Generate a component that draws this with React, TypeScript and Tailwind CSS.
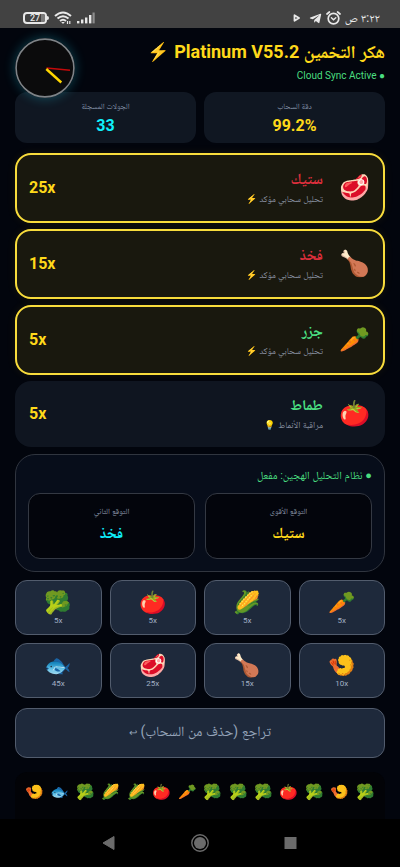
import { FaTelegramPlane } from 'react-icons/fa';

const predictions = [
  { icon: '🥩', name: 'ستيك', rate: '25x', color: 'text-[#dc2f3c]', sure: true },
  { icon: '🍗', name: 'فخذ', rate: '15x', color: 'text-[#dc2f3c]', sure: true },
  { icon: '🥕', name: 'جزر', rate: '5x', color: 'text-[#4ade80]', sure: true },
  { icon: '🍅', name: 'طماط', rate: '5x', color: 'text-[#4ade80]', sure: false },
];

const items = [
  { icon: '🥕', rate: '5x' },
  { icon: '🌽', rate: '5x' },
  { icon: '🍅', rate: '5x' },
  { icon: '🥦', rate: '5x' },
  { icon: '🍤', rate: '10x' },
  { icon: '🍗', rate: '15x' },
  { icon: '🥩', rate: '25x' },
  { icon: '🐟', rate: '45x' },
];

const rounds = ['🥦', '🍤', '🥦', '🍅', '🥦', '🥦', '🥦', '🥕', '🍅', '🌽', '🌽', '🥦', '🐟', '🍤'];

function StatusBar() {
  return (
    <div dir="ltr" className="h-7 bg-[#424242] text-[#e8e8e8] flex items-center justify-between pl-[23px] pr-5 pt-2">
      <div className="flex items-center gap-[5px]">
        <div className="flex items-center">
          <div className="relative w-6 h-3 rounded-[4px] border-2 border-[#e8e8e8] overflow-hidden flex items-center justify-center">
            <span className="absolute inset-y-0 right-0 w-1 bg-[#7a7a7a]" />
            <span className="relative text-[9px] leading-none font-medium">27</span>
          </div>
          <span className="w-0.5 h-1 bg-[#e8e8e8] rounded-r-sm" />
        </div>
        {/* wifi */}
        <svg width="18" height="14" viewBox="0 0 18 14" fill="none" stroke="currentColor" strokeWidth="2">
          <path d="M1 5 Q9 -2 17 5" />
          <path d="M3.5 7.5 Q9 3 14.5 7.5" />
          <path d="M6 10 Q9 7.5 12 10" />
          <path d="M7.2 11 L9 13 L10.8 11 Z" fill="currentColor" stroke="none" />
          <path d="M13.5 10v3M15.8 10v3" strokeWidth="1.2" />
        </svg>
        {/* signal */}
        <svg width="18" height="12" viewBox="0 0 18 12" fill="currentColor">
          <rect x="0" y="9" width="2.4" height="2.4" />
          <rect x="4" y="7.5" width="2.4" height="3.9" />
          <rect x="8" y="5.5" width="2.4" height="5.9" />
          <rect x="12" y="3" width="2.4" height="8.4" />
          <rect x="15.5" y="0.5" width="2.2" height="10.9" opacity="0.45" />
        </svg>
      </div>
      <div className="flex items-center">
        <svg width="8" height="8" viewBox="0 0 8 8" className="mr-2">
          <path d="M1.5 1.2 L6 4 L1.5 6.8 Z" fill="none" stroke="currentColor" strokeWidth="1.8" strokeLinejoin="round" />
        </svg>
        <FaTelegramPlane className="w-[13px] h-[13px] mr-1" />
        <svg width="15" height="14" viewBox="0 0 15 14" fill="none" stroke="currentColor" strokeWidth="1.7" strokeLinecap="round" className="mr-1">
          <circle cx="7.5" cy="7.6" r="5.3" />
          <path d="M5.4 6.8 L7.5 8.8 L9.8 6.8" strokeWidth="1.4" />
          <path d="M1 3 L3.4 1M14 3 L11.6 1" />
        </svg>
        <span dir="rtl" className="text-xs leading-none">٣:٢٢ ص</span>
      </div>
    </div>
  );
}

function Clock() {
  return (
    <div className="absolute left-0 top-[10px] w-[60px] h-[60px] rounded-full shadow-[0_0_12px_rgba(34,211,238,0.3)]">
      <svg viewBox="0 0 60 60" className="w-full h-full">
        <circle cx="30" cy="30" r="28.9" fill="#0b0b0c" stroke="#7f8488" strokeWidth="1.6" />
        <path d="M31.5 30 L55 32.3" stroke="#c40a0a" strokeWidth="1.6" />
        <path d="M31.3 31 L46.3 44.5" stroke="#ffd700" strokeWidth="2.4" />
      </svg>
    </div>
  );
}

function Stat({ label, value, color }: { label: string; value: string; color: string }) {
  return (
    <div className="flex-1 rounded-xl bg-[#101722] pt-2 pb-1.5 flex flex-col items-center">
      <span className="text-[8px] leading-[14px] text-[#8391a7]">{label}</span>
      <span className={`text-base leading-[23px] font-bold ${color}`}>{value}</span>
    </div>
  );
}

function Prediction({ icon, name, rate, color, sure }: (typeof predictions)[number]) {
  return (
    <li
      className={`rounded-2xl flex items-center ${
        sure
          ? 'h-[70px] px-3 border-2 border-[#f8dc3c] bg-[#19180e] shadow-[0_0_10px_rgba(250,204,21,0.08)]'
          : 'h-[66px] px-3.5 bg-[#0f1520]'
      }`}
    >
      <span className="text-[25px] leading-8 w-8 flex justify-center">{icon}</span>
      <div className="flex-1 pr-4">
        <div className={`text-[15px] leading-[22px] font-bold ${color}`}>{name}</div>
        <div className="text-[9px] leading-[18px] text-[#8b93a3]">{sure ? 'تحليل سحابي مؤكد ⚡' : 'مراقبة الأنماط 💡'}</div>
      </div>
      <span className="text-base font-bold text-[#ffd91a]">{rate}</span>
    </li>
  );
}

function Guess({ label, value, color }: { label: string; value: string; color: string }) {
  return (
    <div className="flex-1 h-[66px] rounded-xl border border-[#343943] bg-[#03050c] flex flex-col items-center pt-2.5">
      <span className="text-[8px] leading-[15px] text-[#8f9aad]">{label}</span>
      <span className={`text-[15px] leading-7 font-bold ${color}`}>{value}</span>
    </div>
  );
}

export default function App() {
  return (
    <div
      dir="rtl"
      className="min-h-screen flex flex-col bg-[#02050d] text-white font-[Roboto,'Noto_Naskh_Arabic','Noto_Sans_Arabic','Noto_Color_Emoji',sans-serif]"
    >
      <StatusBar />

      <main className="flex-1 flex flex-col px-[15px]">
        <header className="relative pt-2.5">
          <h1 className="text-lg leading-7 font-bold text-[#ffd91a]">هكر التخمين Platinum V55.2 ⚡</h1>
          <p className="text-[10px] leading-5 pb-1.5 text-[#4ade80]">● Cloud Sync Active</p>
          <Clock />
        </header>

        <section className="flex gap-2">
          <Stat label="دقة السحاب" value="99.2%" color="text-[#ffd91a]" />
          <Stat label="الجولات المسجلة" value="33" color="text-[#0ff0fc]" />
        </section>

        <ul className="mt-2.5 flex flex-col gap-1.5">
          {predictions.map((p) => (
            <Prediction key={p.name} {...p} />
          ))}
        </ul>

        <section className="mt-[7px] rounded-[20px] border border-[#30353f] bg-[#070d1a] p-3">
          <h2 className="text-[11px] leading-[18px] text-[#4ade80]">● نظام التحليل الهجين: مفعل</h2>
          <div className="mt-2 flex gap-2.5">
            <Guess label="التوقع الأقوى" value="ستيك" color="text-[#ffd91a]" />
            <Guess label="التوقع الثاني" value="فخذ" color="text-[#0ff0fc]" />
          </div>
        </section>

        <section className="mt-2 grid grid-cols-4 gap-2">
          {items.map((item) => (
            <button
              key={item.icon}
              className="h-[55px] rounded-xl border border-[#525c6d] bg-[#1e293b] flex flex-col items-center justify-center"
            >
              <span className="text-[22px] leading-[26px]">{item.icon}</span>
              <span className="text-[8px] leading-[10px] text-[#a3b1c6]">{item.rate}</span>
            </button>
          ))}
        </section>

        <button className="mt-2.5 h-[50px] rounded-xl border border-[#525c6d] bg-[#1e293b] pb-1 text-sm text-[#94a3b8]">
          تراجع (حذف من السحاب) <span className="text-[10px]">{'↩\uFE0E'}</span>
        </button>

        <section className="mt-3.5 flex-1 rounded-t-xl bg-[#020307] px-2.5 pt-2 flex justify-between">
          {rounds.map((icon, i) => (
            <span key={i} className="text-[15px] leading-6">
              {icon}
            </span>
          ))}
        </section>
      </main>

      <nav dir="ltr" className="h-12 bg-black flex items-center justify-center gap-[73px] text-[#6b6b6b]">
        <button aria-label="رجوع">
          <svg width="18" height="16" viewBox="0 0 18 16">
            <path d="M3 8 L14 1.5 L14 14.5 Z" fill="currentColor" stroke="currentColor" strokeLinejoin="round" />
          </svg>
        </button>
        <button aria-label="الرئيسية">
          <svg width="18" height="18" viewBox="0 0 18 18">
            <circle cx="9" cy="9" r="8.2" fill="none" stroke="currentColor" strokeWidth="1.4" />
            <circle cx="9" cy="9" r="6" fill="currentColor" />
          </svg>
        </button>
        <button aria-label="التطبيقات">
          <svg width="18" height="16" viewBox="0 0 18 16">
            <rect x="2.5" y="2" width="12" height="12" fill="currentColor" />
          </svg>
        </button>
      </nav>
    </div>
  );
}
